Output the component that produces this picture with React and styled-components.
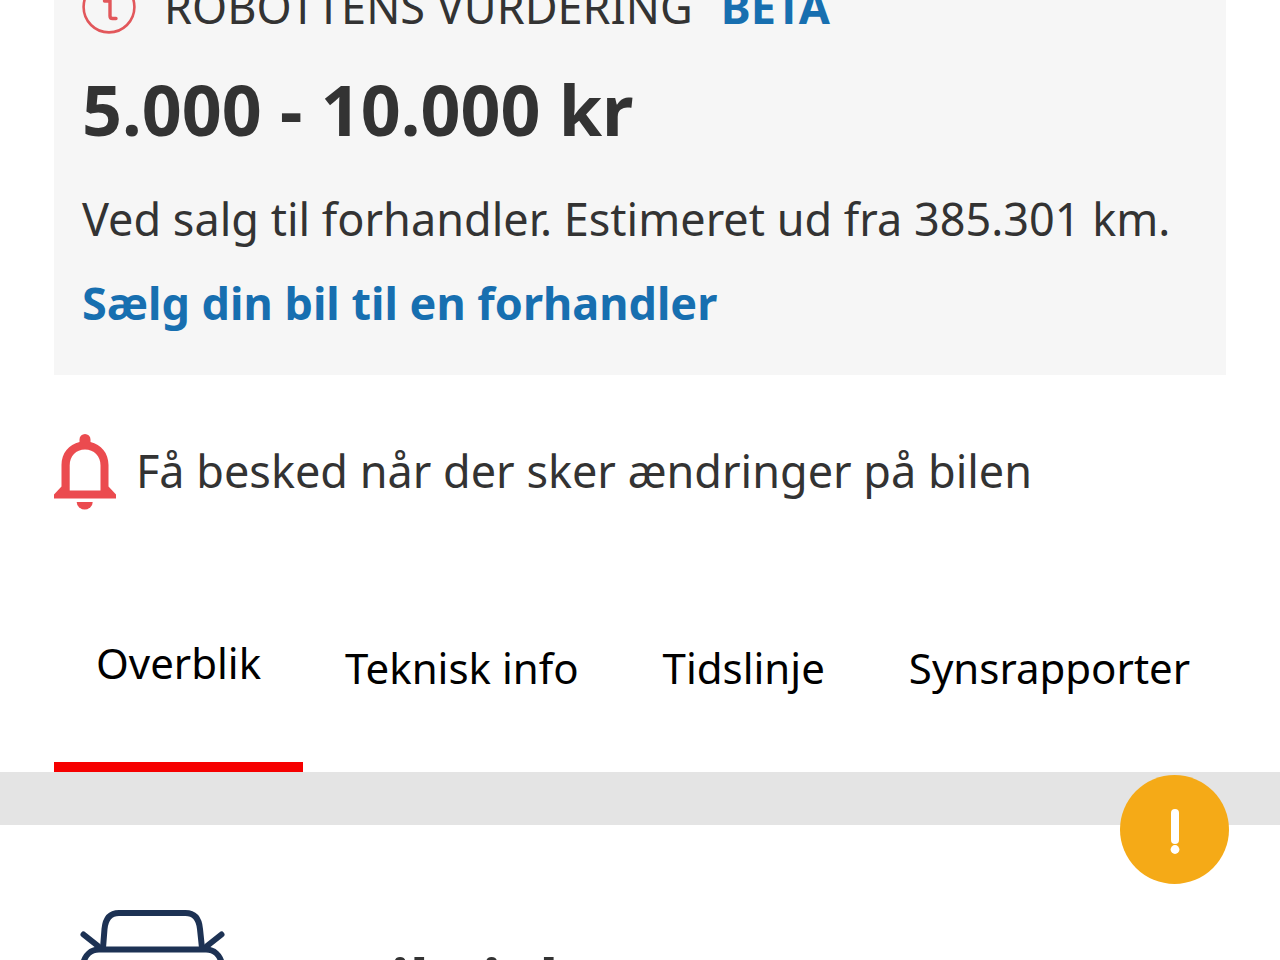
import React, { useState } from "react";
import styled, { createGlobalStyle } from "styled-components";

const tabs = ["Overblik", "Teknisk info", "Tidslinje", "Synsrapporter"];

const RobotIcon = () => (
  <svg width="54" height="54" viewBox="0 0 54 54" fill="none" stroke="#e2575b" aria-hidden="true">
    <circle cx="27" cy="27" r="25.4" strokeWidth="2.6" />
    <path d="M28 12v24q0 2.500 2.500 2.500h3.500M22.500 21H28" strokeWidth="3.4" strokeLinecap="round" />
  </svg>
);

const BellIcon = () => (
  <svg width="62" height="76" viewBox="0 0 62 76" fill="#eb4b4f" aria-hidden="true">
    <path
      fillRule="evenodd"
      d="M31 0a5.500 5.500 0 0 1 5.500 5.500v2.500C47 10.500 54.500 19 54.500 31v21.500L62 60.500v4H0v-4l7.500-8V31C7.500 19 15 10.500 25.500 8V5.500A5.500 5.500 0 0 1 31 0zM31 15.500c-9 0-15.300 6.500-15.300 16v25h30.800v-25c0-9.500-6.500-16-15.500-16z"
    />
    <path d="M22.700 68h16a8 7.500 0 0 1-16 0z" />
  </svg>
);

const CarIcon = () => (
  <svg
    width="145"
    height="144"
    viewBox="0 0 145 144"
    fill="none"
    stroke="#1d3254"
    strokeWidth="6"
    strokeLinecap="round"
    aria-hidden="true"
  >
    <path d="M23 38l1.500-19C25.500 8 31 3 39 3h66.500c8 0 13.500 5 14.500 16l2 19" />
    <path d="M3.500 24.500L18 36M141.500 24.500L127 36" />
    <path d="M3 54c2-9 8-14.500 16-14.500h107c8 0 14 5.500 16 14.500v46H3z" />
    <path d="M16 100v20h20v-20M109 100v20h20v-20" />
    <circle cx="28" cy="76" r="8" />
    <circle cx="117" cy="76" r="8" />
  </svg>
);

const App = () => {
  const [active, setActive] = useState("Overblik");

  return (
    <>
      <GlobalStyle />
      <Page>
        <Estimate>
          <EstimateHeader>
            <RobotIcon />
            <span>ROBOTTENS VURDERING</span>
            <Beta>BETA</Beta>
          </EstimateHeader>
          <Price>5.000 - 10.000 kr</Price>
          <Description>Ved salg til forhandler. Estimeret ud fra 385.301 km.</Description>
          <SellLink href="#forhandler">Sælg din bil til en forhandler</SellLink>
        </Estimate>

        <NotifyButton type="button">
          <BellIcon />
          Få besked når der sker ændringer på bilen
        </NotifyButton>

        <TabBar role="tablist">
          {tabs.map((tab) => (
            <Tab
              key={tab}
              type="button"
              role="tab"
              aria-selected={active === tab}
              $active={active === tab}
              onClick={() => setActive(tab)}
            >
              {tab}
            </Tab>
          ))}
        </TabBar>
        <Divider />

        <Section>
          <CarIcon />
          <SectionTitle>Bil vielse</SectionTitle>
        </Section>
      </Page>

      <AlertButton type="button" aria-label="Advarsel">
        <svg width="12" height="48" viewBox="0 0 12 48" fill="#fff" aria-hidden="true">
          <rect x="2" y="3" width="8" height="35" rx="4" />
          <circle cx="6" cy="43.500" r="4.400" />
        </svg>
      </AlertButton>
    </>
  );
};

const GlobalStyle = createGlobalStyle`
  * {
    box-sizing: border-box;
  }

  body {
    margin: 0;
    background: #fff;
    color: #333;
    font-family: "Noto Sans", sans-serif;
    font-size: 45px;
    line-height: 60px;
    overflow: hidden;
  }

  svg {
    display: block;
    flex-shrink: 0;
  }

  button {
    border: none;
    background: none;
    padding: 0;
    color: inherit;
    font: inherit;
    cursor: pointer;
  }
`;

const Page = styled.main`
  margin-top: -39px;
`;

const Estimate = styled.section`
  display: flex;
  flex-direction: column;
  align-items: flex-start;
  margin: 0 54px;
  padding: 16px 28px 42px;
  background: #f6f6f6;
`;

const EstimateHeader = styled.div`
  display: flex;
  align-items: center;
  gap: 28px;
`;

const Beta = styled.strong`
  color: #176fb0;
`;

const Price = styled.h2`
  margin: 30px 0 38px;
  font-size: 70px;
  font-weight: 700;
  line-height: 84px;
`;

const Description = styled.p`
  margin: 0 0 24px;
`;

const SellLink = styled.a`
  color: #176fb0;
  font-weight: 700;
  text-decoration: none;
`;

const NotifyButton = styled.button`
  display: flex;
  align-items: flex-start;
  gap: 20px;
  margin: 59px 54px 54px;
  text-align: left;

  && {
    line-height: 74px;
  }
`;

const TabBar = styled.div`
  display: flex;
  height: 208px;
  padding-left: 54px;
  overflow-x: auto;
  scrollbar-width: none;
`;

const Tab = styled.button`
  flex-shrink: 0;

  && {
    padding: 0 42px;
    border-bottom: ${(p) => (p.$active ? "10px solid #f60000" : "none")};
    color: #000;
    font-size: 42px;
  }
`;

const Divider = styled.div`
  height: 53px;
  background: #e4e4e4;
`;

const Section = styled.section`
  display: flex;
  align-items: center;
  gap: 123px;
  padding: 85px 80px;
`;

const SectionTitle = styled.h2`
  margin: 0;
  font-size: 64px;
  font-weight: 700;
  line-height: 84px;
`;

const AlertButton = styled.button`
  position: fixed;
  right: 51px;
  bottom: 76px;
  display: flex;
  align-items: center;
  justify-content: center;
  width: 109px;
  height: 109px;

  && {
    border-radius: 50%;
    background: #f5aa17;
  }
`;

export default App;
